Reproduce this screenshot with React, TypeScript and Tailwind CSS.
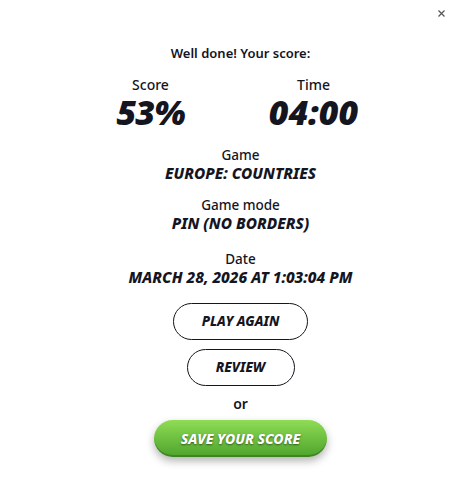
import React from "react";

export default function App() {
  const font = { fontFamily: '"Noto Sans", "Open Sans", sans-serif' };
  return (
    <div className="relative w-[475px] h-[484px] bg-white text-[#15151f]" style={font}>
      <button className="absolute right-[29px] top-[8px] w-[10px] h-[10px] flex items-center justify-center text-[#555]">
        <svg width="7" height="7" viewBox="0 0 7 7">
          <path d="M0.5 0.5L6.5 6.5M6.5 0.5L0.5 6.5" stroke="#555" strokeWidth="1.2" />
        </svg>
      </button>
      <div className="flex flex-col items-center pt-[43px] pl-[6px]">
        <div className="text-[13px] font-semibold leading-[20px]">Well done! Your score:</div>
        <div className="flex gap-[71px] mt-[14px] mr-[17px]">
          <div className="flex flex-col items-center w-[92px]">
            <div className="text-[14px] leading-[16px] font-medium">Score</div>
            <div className="text-[34px] leading-[38px] font-black italic tracking-[-1px]">53%</div>
          </div>
          <div className="flex flex-col items-center w-[92px]">
            <div className="text-[14px] leading-[16px] font-medium">Time</div>
            <div className="text-[34px] leading-[38px] font-black italic tracking-[0px]">04:00</div>
          </div>
        </div>
        <div className="flex flex-col items-center mt-[15px]">
          <div className="text-[13.5px] leading-[18px] font-medium">Game</div>
          <div className="text-[15.4px] leading-[20px] font-extrabold italic">EUROPE: COUNTRIES</div>
        </div>
        <div className="flex flex-col items-center mt-[12px]">
          <div className="text-[13.5px] leading-[18px] font-medium">Game mode</div>
          <div className="text-[15.4px] leading-[20px] font-extrabold italic">PIN (NO BORDERS)</div>
        </div>
        <div className="flex flex-col items-center mt-[16px]">
          <div className="text-[13.5px] leading-[18px] font-medium">Date</div>
          <div className="text-[15.4px] leading-[20px] font-extrabold italic">MARCH 28, 2026 AT 1:03:04 PM</div>
        </div>
        <button className="mt-[15px] w-[135px] h-[37px] rounded-full border border-[#15151f] text-[13.5px] font-extrabold italic">
          PLAY AGAIN
        </button>
        <button className="mt-[9px] w-[108px] h-[37px] rounded-full border border-[#15151f] text-[13.5px] font-extrabold italic">
          REVIEW
        </button>
        <div className="mt-[9px] text-[14px] leading-[18px] font-semibold">or</div>
        <button className="mt-[7px] w-[173px] h-[37px] rounded-full bg-gradient-to-b from-[#8fdc55] to-[#4da42c] text-white text-[14px] font-extrabold italic shadow-[0_4px_8px_rgba(0,0,0,0.3),inset_0_-2px_0_rgba(0,0,0,0.2)] [text-shadow:0_1px_2px_rgba(0,0,0,0.5)]">
          SAVE YOUR SCORE
        </button>
      </div>
    </div>
  );
}
